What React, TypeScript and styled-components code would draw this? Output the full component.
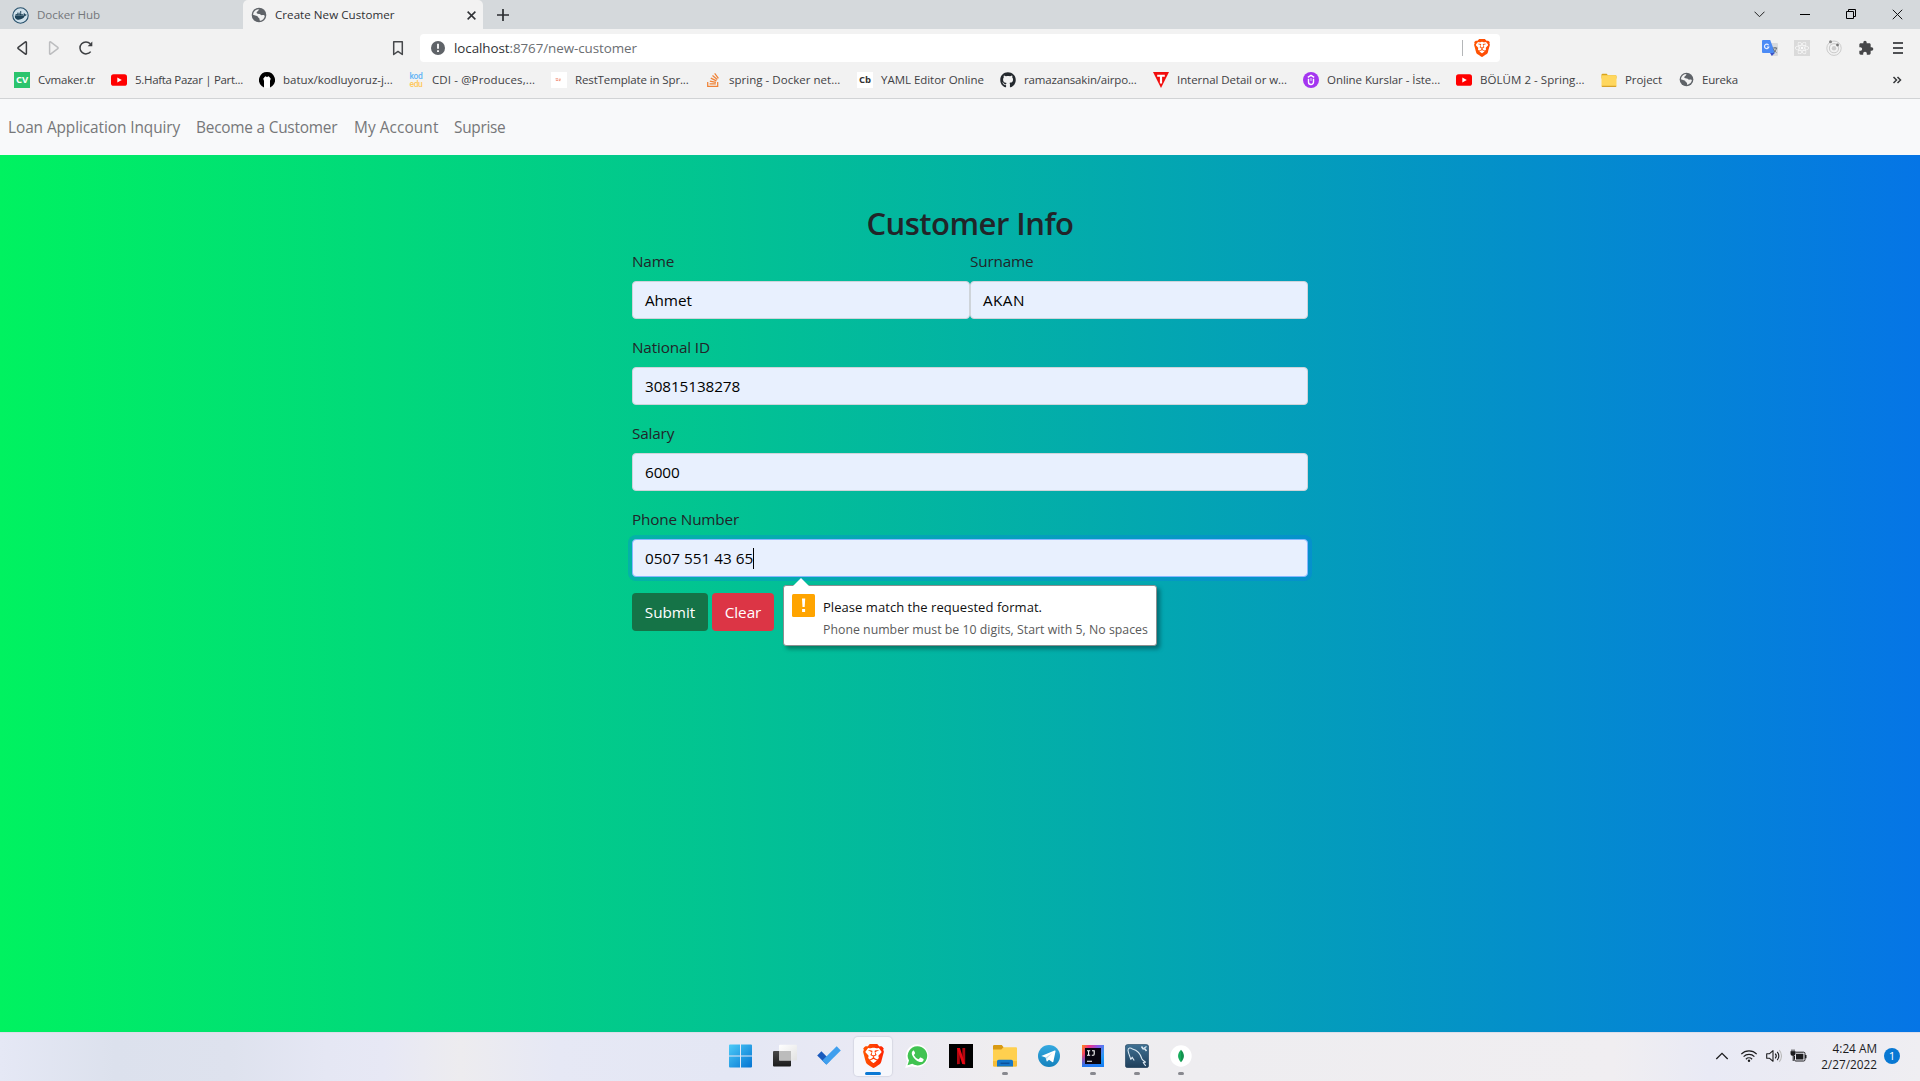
import React from "react";
import styled, { createGlobalStyle, css } from "styled-components";
import { FaDocker, FaGithub, FaReact, FaStackOverflow } from "react-icons/fa";
import { MdExtension } from "react-icons/md";
import { SiBrave } from "react-icons/si";

const GlobalStyle = createGlobalStyle`
  *, *::before, *::after { box-sizing: border-box; }
  body { margin: 0; overflow: hidden; font-family: "Open Sans", "Noto Sans", sans-serif; }
  svg { display: block; flex: none; }
`;

const Screen = styled.div`
  display: flex;
  flex-direction: column;
  width: 1920px;
  height: 1081px;
  overflow: hidden;
`;

/* ---------- browser chrome ---------- */

const TabStrip = styled.div`
  display: flex;
  height: 29px;
  background: #d5d9dc;
`;

const Tab = styled.div<{ $active?: boolean }>`
  display: flex;
  align-items: center;
  gap: 8px;
  width: ${(p) => (p.$active ? 240 : 243)}px;
  padding: 1px 7px 0 ${(p) => (p.$active ? 8 : 12)}px;
  background: ${(p) => (p.$active ? "#f2f2f2" : "transparent")};
  border-radius: ${(p) => (p.$active ? "5px 5px 0 0" : "0")};
  color: ${(p) => (p.$active ? "#2f3033" : "#74777b")};
`;

const TabTitle = styled.span<{ $ls?: number }>`
  flex: 1;
  font-size: 11.6px;
  line-height: 16px;
  letter-spacing: ${(p) => p.$ls ?? 0.03}px;
  white-space: nowrap;
`;

const NewTab = styled.div`
  display: flex;
  align-items: center;
  padding: 1px 0 0 14px;
`;

const WindowControls = styled.div`
  display: flex;
  margin-left: auto;
`;

const WindowButton = styled.div`
  display: flex;
  align-items: center;
  justify-content: center;
  width: 46px;
  height: 28px;
`;

const Toolbar = styled.div`
  display: flex;
  align-items: center;
  height: 38px;
  padding-left: 14px;
  background: #f2f2f2;
`;

const NavButtons = styled.div`
  display: flex;
  align-items: center;
  gap: 16px;
  width: 376px;
`;

const AddressBar = styled.div`
  display: flex;
  align-items: center;
  width: 1080px;
  height: 28px;
  margin-left: 14px;
  padding: 0 10px 0 10px;
  background: #fff;
  border-radius: 4px;
`;

const Url = styled.div`
  flex: 1;
  margin-left: 8px;
  color: #6b6e72;
  font-size: 13.4px;
  letter-spacing: -0.07px;
  line-height: 20px;
`;

const Host = styled.span`
  color: #303236;
`;

const AddressDivider = styled.div`
  width: 1px;
  height: 16px;
  margin-right: 11px;
  background: #b4b6b8;
`;

const Extensions = styled.div`
  display: flex;
  align-items: center;
  gap: 16px;
  margin-left: auto;
  padding-right: 14px;
`;

const BookmarksBar = styled.div`
  display: flex;
  align-items: center;
  height: 32px;
  padding: 0 15px 6px 14px;
  background: #f2f2f2;
  border-bottom: 1px solid #d1d3d5;
`;

const Bookmark = styled.div<{ $width: number }>`
  display: flex;
  flex: none;
  align-items: center;
  gap: 8px;
  width: ${(p) => p.$width}px;
  color: #3f4144;
`;

const BookmarkTitle = styled.span<{ $ls: number }>`
  font-size: 11.5px;
  line-height: 16px;
  letter-spacing: ${(p) => p.$ls}px;
  white-space: nowrap;
`;

const More = styled.div`
  margin-left: auto;
`;

const Favicon = styled.span<{ $bg?: string; $color?: string; $size?: number }>`
  display: flex;
  flex: none;
  flex-direction: column;
  align-items: center;
  justify-content: center;
  width: 16px;
  height: 16px;
  background: ${(p) => p.$bg ?? "transparent"};
  color: ${(p) => p.$color ?? "#fff"};
  font-size: ${(p) => p.$size ?? 9}px;
  font-weight: 700;
  line-height: 1;
`;

const KodEdu = styled.span<{ $color: string }>`
  color: ${(p) => p.$color};
  font-family: Roboto, sans-serif;
  font-size: 8.5px;
  font-weight: 500;
  line-height: 8px;
  letter-spacing: -0.4px;
`;

/* ---------- page ---------- */

const Navbar = styled.nav`
  display: flex;
  align-items: center;
  height: 56px;
  padding: 2px 0 0 8px;
  background: #f8f9fa;
`;

const NavLink = styled.a<{ $width: number; $ls: number }>`
  width: ${(p) => p.$width}px;
  color: #767779;
  font-size: 15.4px;
  letter-spacing: ${(p) => p.$ls}px;
  line-height: 24px;
  white-space: nowrap;
`;

const Page = styled.main`
  display: flex;
  flex-direction: column;
  height: 877px;
  padding: 48px 0 0 632px;
  background: linear-gradient(90deg, #00f260 0%, #0575e6 100%);
`;

const Form = styled.form`
  display: flex;
  flex-direction: column;
  width: 676px;
`;

const Title = styled.h2`
  height: 38px;
  margin: 0 0 8px;
  color: #212529;
  font-size: 31px;
  font-weight: 600;
  letter-spacing: -0.52px;
  line-height: 40px;
  text-align: center;
`;

const FieldRow = styled.div`
  display: flex;
`;

const Field = styled.div`
  position: relative;
  flex: 1;
  margin-bottom: 16px;
`;

const Label = styled.label`
  display: block;
  margin-bottom: 8px;
  color: #212529;
  font-size: 15.3px;
  letter-spacing: -0.16px;
  line-height: 24px;
`;

const Input = styled.div<{ $focus?: boolean; $ls?: number }>`
  display: flex;
  align-items: center;
  height: 38px;
  padding: 0 12px;
  border: 1px solid #ced4da;
  border-radius: 4px;
  background: #e8f0fe;
  color: #000;
  font-size: 15.3px;
  letter-spacing: ${(p) => p.$ls ?? -0.1}px;
  ${(p) =>
    p.$focus &&
    css`
      border-color: #86b7fe;
      box-shadow: 0 0 0 4px rgba(13, 110, 253, 0.25);
    `}
`;

const Caret = styled.span`
  width: 1px;
  height: 21px;
  background: #000;
`;

const Buttons = styled.div`
  display: flex;
  gap: 4px;
`;

const Button = styled.div<{ $bg: string; $width: number }>`
  width: ${(p) => p.$width}px;
  height: 38px;
  border-radius: 4px;
  background: ${(p) => p.$bg};
  color: #fff;
  font-size: 15.3px;
  letter-spacing: -0.05px;
  line-height: 38px;
  text-align: center;
`;

/* validation bubble that floats below the phone field */
const Bubble = styled.div`
  position: absolute;
  z-index: 2;
  top: 78px;
  left: 151px;
  display: flex;
  gap: 8px;
  width: 374px;
  height: 61px;
  padding: 8px;
  border: 1px solid #8b8f90;
  border-radius: 3px;
  background: #fff;
  box-shadow: 3px 3px 4px rgba(0, 0, 0, 0.35);
`;

const BubbleArrow = styled.div`
  position: absolute;
  top: -8px;
  left: 9px;
  border: solid transparent;
  border-width: 0 8px 8px;
  border-bottom-color: #fff;
`;

const BubbleText = styled.div`
  display: flex;
  flex-direction: column;
  padding-top: 2px;
  white-space: nowrap;
`;

const BubbleMessage = styled.span`
  color: #111;
  font-size: 13px;
  letter-spacing: 0.05px;
  line-height: 22px;
`;

const BubbleHint = styled.span`
  color: #5a5a5a;
  font-size: 12.3px;
  letter-spacing: 0.02px;
  line-height: 24px;
`;

/* ---------- taskbar ---------- */

const Taskbar = styled.footer`
  display: grid;
  grid-template-columns: 719px 484px 1fr;
  height: 49px;
  border-top: 1px solid #dcdeea;
  background: linear-gradient(
    90deg,
    #e5e8f5 0%,
    #dce1ed 6%,
    #dee2ee 12%,
    #e5e7f4 17%,
    #e7e8f5 20%,
    #edecef 24%,
    #e6e8f5 29%,
    #e4e7f4 38%,
    #e9e9f4 45%,
    #efedef 52%,
    #eeedf0 62%,
    #f0eef1 84%,
    #e9eaf5 89%,
    #ebebf3 94%,
    #efeef2 100%
  );
`;

const Apps = styled.div`
  display: flex;
  grid-column: 2;
`;

const AppSlot = styled.div`
  display: flex;
  flex-direction: column;
  align-items: center;
  width: 44px;
  padding-top: 4px;
`;

const AppTile = styled.div<{ $active?: boolean }>`
  display: flex;
  flex-direction: column;
  align-items: center;
  width: 38px;
  height: 39px;
  padding-top: 7px;
  border-radius: 4px;
  background: ${(p) => (p.$active ? "#f6f7fc" : "transparent")};
  box-shadow: ${(p) => (p.$active ? "0 0 1px 1px rgba(120,125,150,0.16)" : "none")};
`;

const Indicator = styled.div<{ $active?: boolean }>`
  width: ${(p) => (p.$active ? 16 : 6)}px;
  height: 3px;
  margin-top: 4px;
  border-radius: 2px;
  background: ${(p) => (p.$active ? "#0a78d4" : "#88898f")};
`;

const Tray = styled.div`
  display: flex;
  grid-column: 3;
  align-items: center;
  justify-content: flex-end;
  padding: 0 20px 2px 0;
  color: #1c1c1e;
`;

const TrayIcons = styled.div`
  display: flex;
  align-items: center;
  gap: 8px;
  margin-right: 13px;
`;

const Clock = styled.div`
  width: 57px;
  margin-right: 7px;
  font-size: 11.8px;
  line-height: 16px;
  text-align: right;
`;

const Badge = styled.div`
  width: 16px;
  height: 16px;
  border-radius: 50%;
  background: #0878d3;
  color: #fff;
  font-size: 11.5px;
  line-height: 16px;
  text-align: center;
`;

/* ---------- icons ---------- */

const Globe = ({ size = 16 }: { size?: number }) => (
  <svg width={size} height={size} viewBox="0 0 16 16">
    <circle cx="8" cy="8" r="7.300" fill="#5f6368" />
    <path
      d="M8.600 2.200C7.200 2.300 7.900 3.600 6.700 4.300 5.600 4.900 5.200 5.600 6.100 6.400c1 .7 2.600.1 3.300 1.100.7.900 1.700.6 2.700.6 1 .1 1.700.5 1.600 1.300a6 6 0 0 1-4.300 4.300c-1.100.2-.7-1-.9-1.900-.3-1.100-1.500-.9-1.700-2C6.600 8.900 5.500 8.600 4.300 8.400L2 7.700A6.100 6.100 0 0 1 8.600 2.200z"
      fill="#f2f2f2"
    />
  </svg>
);

const DockerIcon = () => (
  <svg width="17" height="17" viewBox="0 0 17 17">
    <circle cx="8.500" cy="8.500" r="7.700" fill="#cfe0ea" stroke="#27506b" strokeWidth="1.100" />
    <FaDocker x="2.700" y="2.500" size={12} color="#1d4258" />
  </svg>
);

const CloseIcon = ({ size, stroke, width }: { size: number; stroke: string; width: number }) => (
  <svg width={size} height={size} viewBox="0 0 10 10">
    <path d="M.7.7l8.600 8.600M9.300.7L.7 9.300" stroke={stroke} strokeWidth={width} />
  </svg>
);

const Triangle = ({ flip, color }: { flip?: boolean; color: string }) => (
  <svg width="16" height="16" viewBox="0 0 16 16">
    <path
      d="M12.400 2.400v11.200a.6.6 0 0 1-.95.5L4.200 8.600a.75.75 0 0 1 0-1.200l7.250-5.500a.6.6 0 0 1 .95.5z"
      transform={flip ? "matrix(-1 0 0 1 16 0)" : undefined}
      fill="none"
      stroke={color}
      strokeWidth="1.500"
      strokeLinejoin="round"
    />
  </svg>
);

const YouTube = () => (
  <svg width="16" height="16" viewBox="0 0 16 16">
    <rect y="2.200" width="16" height="11.600" rx="2.600" fill="#f00" />
    <path d="M6.300 5.500L10.800 8l-4.500 2.500z" fill="#fff" />
  </svg>
);

const Penguin = () => (
  <svg width="16" height="16" viewBox="0 0 16 16">
    <path d="M8 0a8 8 0 0 0-5.300 14L5 15.600V9L4.400 6.600 6.300 4.300 8 5l1.700-.7 1.900 2.300L11 9v6.600l2.300-1.600A8 8 0 0 0 8 0z" fill="#000" />
    <path d="M5.200 15.600V9l-.6-2.300 1.800-2L8 5.400l1.600-.7 1.800 2L10.800 9v6.600L8 16z" fill="#fff" />
  </svg>
);

const TurkTriangle = () => (
  <svg width="16" height="16" viewBox="0 0 16 16">
    <path d="M0 0h16L8 16z" fill="#f20d0d" />
    <path d="M4.200 2.700h7.600v2H9.100v6.800H6.900V4.700H4.200z" fill="#fff" />
  </svg>
);

const UdemyLike = () => (
  <svg width="16" height="16" viewBox="0 0 16 16">
    <circle cx="8" cy="8" r="8" fill="#a435f0" />
    <path d="M5.500 6.800v3.200a2.500 2.500 0 0 0 5 0V6.800M4.800 5.300L8 3.400l3.200 1.900" fill="none" stroke="#fff" strokeWidth="1.400" />
    <path d="M8 6v3" stroke="#fff" strokeWidth=".8" />
  </svg>
);

const FolderSmall = () => (
  <svg width="16" height="16" viewBox="0 0 16 16">
    <path d="M.5 3A1.200 1.200 0 0 1 1.700 1.700h4l1.200 1.500h7.400A1.200 1.200 0 0 1 15.500 4.400v2H.5z" fill="#d9a51c" />
    <rect x=".5" y="3.200" width="15" height="11.600" rx="1.200" fill="#ffd75e" />
    <path d="M.7 13.800h14.600v.4a.8.8 0 0 1-.8.8h-13a.8.8 0 0 1-.8-.8z" fill="#d7a22a" />
  </svg>
);

const Translate = () => (
  <svg width="16" height="16" viewBox="0 0 16 16">
    <path d="M6.500 3H15a1 1 0 0 1 1 1v11a1 1 0 0 1-1 1H10z" fill="#d8dadd" />
    <path d="M1 0h7.200L13 13H1a1 1 0 0 1-1-1V1a1 1 0 0 1 1-1z" fill="#4c8bf5" />
    <path d="M8 13h4.800L9.800 16z" fill="#3a50c8" />
    <path d="M6.600 5.300A2.200 2.200 0 1 0 6.800 7H4.900" fill="none" stroke="#e9f0ff" strokeWidth="1.200" />
    <path d="M10.800 8h4.400M13 7v1M11.500 9c.5 1.500 1.600 2.700 3 3.600M14.500 8c-.4 2-1.500 3.600-3 4.600" fill="none" stroke="#5f676d" strokeWidth=".9" />
  </svg>
);

const ReactTile = () => (
  <svg width="16" height="16" viewBox="0 0 16 16">
    <rect width="16" height="16" fill="#dadada" />
    <FaReact x="1" y="1" size={14} color="#fbfbfb" />
  </svg>
);

const Orbit = () => (
  <svg width="16" height="16" viewBox="0 0 16 16">
    <g fill="none" stroke="#cbcbcb">
      <circle cx="8" cy="8.200" r="7.200" strokeWidth="1" />
      <circle cx="8" cy="8.200" r="4.600" strokeWidth="1.100" />
    </g>
    <circle cx="8" cy="8.200" r="2.200" fill="#cdcdcd" />
    <circle cx="4.500" cy="1.800" r="1.500" fill="#858585" />
    <circle cx="11.500" cy="5" r="1.400" fill="#777" />
  </svg>
);

const LionShape = styled(SiBrave)<{ $fill: string }>`
  fill: ${(p) => p.$fill};
`;

const BraveLion = ({ w, h, from, to }: { w: number; h: number; from: string; to: string }) => {
  const id = `brave${w}`;
  return (
    <svg width={w} height={h} viewBox="1.700 0 20.600 24" preserveAspectRatio="none">
      <defs>
        <linearGradient id={id} x1="0" x2="1">
          <stop offset="0" stopColor={from} />
          <stop offset="1" stopColor={to} />
        </linearGradient>
      </defs>
      <path d="M6 4h12l2 5-2.500 8L12 21.500 6.500 17 4 9z" fill="#fff" />
      <LionShape size={24} $fill={`url(#${id})`} />
    </svg>
  );
};

const WindowsLogo = () => (
  <svg width="24" height="24" viewBox="0 0 24 24">
    <defs>
      <linearGradient id="win" x1="0" y1="0" x2="1" y2="1">
        <stop offset="0" stopColor="#4ccbf8" />
        <stop offset="1" stopColor="#0574d2" />
      </linearGradient>
    </defs>
    <path fill="url(#win)" d="M0 1.500a1 1 0 0 1 1-1h10V11.500H0zM12 .5h10a1 1 0 0 1 1 1v10h-11zM0 12.500h11v11h-10a1 1 0 0 1-1-1zM12 12.500h11v10a1 1 0 0 1-1 1h-10z" />
  </svg>
);

const TaskView = () => (
  <svg width="24" height="24" viewBox="0 0 24 24">
    <defs>
      <linearGradient id="tvd" x1="0" y1="0" x2="0" y2="1">
        <stop offset="0" stopColor="#484848" />
        <stop offset="1" stopColor="#1b1b1b" />
      </linearGradient>
      <linearGradient id="tvl" x1="0" y1="0" x2="1" y2="1">
        <stop offset="0" stopColor="#fff" />
        <stop offset="1" stopColor="#e2e2e2" />
      </linearGradient>
    </defs>
    <rect x="0" y="7" width="18" height="15.500" rx="1" fill="url(#tvd)" />
    <rect x="6" y=".8" width="18" height="15.600" rx="1" fill="url(#tvl)" />
    <path d="M6 7h12v9.400H6z" fill="#bcbcbc" />
  </svg>
);

const TodoCheck = () => (
  <svg width="24" height="24" viewBox="0 0 24 24">
    <path d="M.2 11.500L4.400 7.300l9 9-4.100 4.200z" fill="#195abd" />
    <path d="M5.300 16.600L19.700 2.200l4.100 4.200L9.400 20.700z" fill="#3f9fee" />
  </svg>
);

const WhatsApp = () => (
  <svg width="24" height="24" viewBox="0 0 24 24">
    <path d="M12.500.3A11.500 11.500 0 1 1 7 22.200L.2 23.900l2-6.700A11.500 11.500 0 0 1 12.500.3z" fill="#fff" />
    <path d="M12.500 2.200a9.600 9.600 0 1 1-5.200 17.600l-4.800 1.400 1.500-4.600A9.600 9.600 0 0 1 12.500 2.200z" fill="#40c351" />
    <path
      d="M8.900 6.500c-.3 0-.8.100-1.200.6-.7.800-1.300 1.900-.6 3.800 1.300 3.300 4.100 6 7.600 7 1.700.4 3.100-.3 3.700-1.500.2-.5.300-1.200.1-1.400l-2.700-1.500c-.4-.2-.7 0-.9.300l-.9 1.200c-.3.300-.6.300-1 .1a9 9 0 0 1-3.900-3.700c-.1-.3-.1-.5.1-.8l.8-1.100c.1-.2.1-.5 0-.7l-1-2c-.1-.2-.1-.3-.1-.3z"
      fill="#fff"
    />
  </svg>
);

const Netflix = () => (
  <svg width="24" height="24" viewBox="0 0 24 24">
    <rect width="24" height="24" fill="#000" />
    <path d="M8 4h2.800v16L8 20.300zM13.400 4h2.800v16.300l-2.800-.3z" fill="#b1060f" />
    <path d="M8 4h2.900l5.300 16.300-2.900-.3z" fill="#e50914" />
  </svg>
);

const Explorer = () => (
  <svg width="24" height="24" viewBox="0 0 24 24">
    <path d="M0 2.200A1.200 1.200 0 0 1 1.200 1h7.600l2 2.600L8.500 6H0z" fill="#d99a12" />
    <path d="M0 5.500h8.500L10.600 3.200H23a1 1 0 0 1 1 1v17.300a1 1 0 0 1-1 1H1a1 1 0 0 1-1-1z" fill="#ffd04f" />
    <path d="M0 17h24v4.500a1 1 0 0 1-1 1H1a1 1 0 0 1-1-1z" fill="#f6bd38" />
    <path d="M4 22.500v-5A1.700 1.700 0 0 1 5.700 15.700h12.600A1.700 1.700 0 0 1 20 17.500v5z" fill="#1477c9" />
    <path d="M7.500 19.300h9" stroke="#0d519b" strokeWidth="1.500" />
  </svg>
);

const Telegram = () => (
  <svg width="24" height="24" viewBox="0 0 24 24">
    <defs>
      <linearGradient id="tg" x1="0" y1="0" x2="0" y2="1">
        <stop offset="0" stopColor="#35a9e0" />
        <stop offset="1" stopColor="#1582bd" />
      </linearGradient>
    </defs>
    <circle cx="12" cy="12" r="11" fill="url(#tg)" />
    <path d="M4.900 11.700L17.600 6.600c.6-.2 1.100.1.9 1l-2.100 9.900c-.2.700-.6.900-1.200.5l-3.200-2.300-1.600 1.500c-.5.500-.8.200-.9-.4l-.9-3.400-3.500-1.100c-.7-.2-.7-.5-.2-.6z" fill="#fff" />
    <path d="M9 13.300l6.400-4.400-5.100 5.100-.3 2.800z" fill="#b9d9ec" />
  </svg>
);

const IntelliJ = () => (
  <svg width="24" height="24" viewBox="0 0 24 24">
    <defs>
      <linearGradient id="ij" x1="0" y1=".1" x2="1" y2=".5">
        <stop offset="0" stopColor="#fd8224" />
        <stop offset=".25" stopColor="#f5317f" />
        <stop offset=".6" stopColor="#8b55e8" />
        <stop offset="1" stopColor="#21a4f5" />
      </linearGradient>
      <linearGradient id="ijb" x1="0" y1="0" x2="0" y2="1">
        <stop offset=".4" stopColor="#0a7cf5" stopOpacity="0" />
        <stop offset="1" stopColor="#1a7bf2" />
      </linearGradient>
    </defs>
    <rect x="1" y="1" width="22" height="22" fill="url(#ij)" />
    <rect x="1" y="1" width="22" height="22" fill="url(#ijb)" />
    <rect x="4" y="4" width="16" height="16" fill="#080510" />
    <path d="M6 6.700h3.200M6 11.300h3.200M7.600 6.700v4.600M11 6.700h2.700M13.200 6.200v3.700q0 1.400-1.300 1.400h-1.100M6 17.200h5" fill="none" stroke="#fff" strokeWidth="1.100" />
  </svg>
);

const Workbench = () => (
  <svg width="24" height="24" viewBox="0 0 24 24">
    <defs>
      <linearGradient id="wb" x1="0" y1="0" x2="0" y2="1">
        <stop offset="0" stopColor="#3f7193" />
        <stop offset="1" stopColor="#1f3f5b" />
      </linearGradient>
    </defs>
    <rect x=".3" y=".5" width="23.400" height="23.200" rx="2.500" fill="url(#wb)" stroke="#21425c" strokeWidth=".6" />
    <path
      d="M5.800 15.500l1.400-2.300 2 3.300M5.800 15.500C4.800 12 3.500 9.500 3 6.500 3 3.500 5.500 3.500 7.500 5c4.500 1 8 5 9.500 10 .5 1.500 2.500 2 3.500 3.200l-2.300.3 2.500 3.300"
      fill="none"
      stroke="#dce9f2"
      strokeWidth="1.100"
      strokeLinejoin="round"
    />
    <path d="M16.500 2.500l1.500 2.200 2 .3 1.500 2" fill="none" stroke="#dce9f2" strokeWidth="1.500" />
    <path d="M18.500 4.500l3-2" stroke="#dce9f2" strokeWidth="1.200" />
  </svg>
);

const Compass = () => (
  <svg width="24" height="24" viewBox="0 0 24 24">
    <circle cx="12" cy="12" r="10.700" fill="#fff" />
    <path d="M12 5.800c3.900 4 3.900 8.400 0 12.400z" fill="#12924f" />
    <path d="M12 5.800c-3.900 4-3.900 8.400 0 12.400z" fill="#17ac5c" />
  </svg>
);

const SketchMark = () => (
  <svg width="16" height="16" viewBox="0 0 16 16">
    <rect width="16" height="16" fill="#fff" />
    <path d="M4.500 6.800h2.500M4.800 8.400h2.200M7.600 7.200h2.200M7.600 8.600h1.800" stroke="#f08a70" strokeWidth=".9" />
  </svg>
);

/* ---------- data ---------- */

const bookmarks: { title: string; width: number; ls: number; icon: React.ReactNode }[] = [
  { title: "Cvmaker.tr", width: 97, ls: -0.2, icon: <Favicon $bg="#2bc46d" $size={9.5}>CV</Favicon> },
  { title: "5.Hafta Pazar | Part...", width: 148, ls: -0.31, icon: <YouTube /> },
  { title: "batux/kodluyoruz-j...", width: 149, ls: -0.02, icon: <Penguin /> },
  {
    title: "CDI - @Produces,...",
    width: 143,
    ls: 0.12,
    icon: (
      <Favicon>
        <KodEdu $color="#64b5f6">kod</KodEdu>
        <KodEdu $color="#ffc95c">edu</KodEdu>
      </Favicon>
    ),
  },
  { title: "RestTemplate in Spr...", width: 154, ls: -0.13, icon: <SketchMark /> },
  { title: "spring - Docker net...", width: 152, ls: 0.03, icon: <FaStackOverflow size={16} color="#ef8236" /> },
  { title: "YAML Editor Online", width: 143, ls: -0.03, icon: <Favicon $bg="#fff" $color="#333" $size={9.5}>Cb</Favicon> },
  { title: "ramazansakin/airpo...", width: 153, ls: -0.17, icon: <FaGithub size={16} color="#24292e" /> },
  { title: "Internal Detail or w...", width: 150, ls: -0.07, icon: <TurkTriangle /> },
  { title: "Online Kurslar - İste...", width: 153, ls: -0.06, icon: <UdemyLike /> },
  { title: "BÖLÜM 2 - Spring...", width: 145, ls: 0.05, icon: <YouTube /> },
  { title: "Project", width: 78, ls: -0.07, icon: <FolderSmall /> },
  { title: "Eureka", width: 80, ls: -0.2, icon: <Globe size={15} /> },
];

const links = [
  { text: "Loan Application Inquiry", width: 188, ls: -0.08 },
  { text: "Become a Customer", width: 158, ls: -0.22 },
  { text: "My Account", width: 100, ls: 0.08 },
  { text: "Suprise", width: 70, ls: -0.3 },
];

const apps: { icon: React.ReactNode; state?: "active" | "open" }[] = [
  { icon: <WindowsLogo /> },
  { icon: <TaskView /> },
  { icon: <TodoCheck /> },
  { icon: <BraveLion w={21} h={24} from="#ff5601" to="#ff2504" />, state: "active" },
  { icon: <WhatsApp /> },
  { icon: <Netflix /> },
  { icon: <Explorer />, state: "open" },
  { icon: <Telegram /> },
  { icon: <IntelliJ />, state: "open" },
  { icon: <Workbench />, state: "open" },
  { icon: <Compass />, state: "open" },
];

export default function App() {
  return (
    <Screen>
      <GlobalStyle />
      <TabStrip>
        <Tab>
          <DockerIcon />
          <TabTitle $ls={-0.1}>Docker Hub</TabTitle>
        </Tab>
        <Tab $active>
          <Globe size={16} />
          <TabTitle>Create New Customer</TabTitle>
          <CloseIcon size={9} stroke="#303236" width={1.7} />
        </Tab>
        <NewTab>
          <svg width="12" height="12" viewBox="0 0 12 12">
            <path d="M6 0v12M0 6h12" stroke="#2b2d30" strokeWidth="1.700" />
          </svg>
        </NewTab>
        <WindowControls>
          <WindowButton>
            <svg width="11" height="7" viewBox="0 0 11 7">
              <path d="M.5.7l5 5 5-5" fill="none" stroke="#222" />
            </svg>
          </WindowButton>
          <WindowButton>
            <svg width="10" height="1" viewBox="0 0 10 1">
              <path d="M0 .5h10" stroke="#000" />
            </svg>
          </WindowButton>
          <WindowButton>
            <svg width="10" height="10" viewBox="0 0 10 10">
              <path d="M.5 2.500h7v7h-7zM2.500 2.500v-2h7v7h-2" fill="none" stroke="#000" />
            </svg>
          </WindowButton>
          <WindowButton>
            <CloseIcon size={11} stroke="#111" width={0.9} />
          </WindowButton>
        </WindowControls>
      </TabStrip>

      <Toolbar>
        <NavButtons>
          <Triangle color="#3d3f42" />
          <Triangle flip color="#bcbdbf" />
          <svg width="16" height="16" viewBox="0 0 16 16">
            <path d="M12.700 11.600A6 6 0 1 1 12.300 3.700" fill="none" stroke="#3d3f42" strokeWidth="1.500" />
            <path d="M14.300 1.600v4.600h-4.600z" fill="#3d3f42" />
          </svg>
        </NavButtons>
        <svg width="16" height="16" viewBox="0 0 16 16">
          <path d="M3.700 1.700h8.600v12.800L8 11.400l-4.300 3.100z" fill="none" stroke="#46484b" strokeWidth="1.500" strokeLinejoin="round" />
        </svg>
        <AddressBar>
          <svg width="16" height="16" viewBox="0 0 16 16">
            <circle cx="8" cy="8" r="7" fill="#5f6368" />
            <path d="M8 3.800v5M8 10.300v1.800" stroke="#fff" strokeWidth="1.800" />
          </svg>
          <Url>
            <Host>localhost</Host>:8767/new-customer
          </Url>
          <AddressDivider />
          <BraveLion w={16} h={18} from="#ff5500" to="#ff4a08" />
        </AddressBar>
        <Extensions>
          <Translate />
          <ReactTile />
          <Orbit />
          <MdExtension size={16} color="#464749" />
          <svg width="16" height="16" viewBox="0 0 16 16">
            <path d="M3 3h10M3 8h10M3 13h10" stroke="#505255" strokeWidth="1.900" />
          </svg>
        </Extensions>
      </Toolbar>

      <BookmarksBar>
        {bookmarks.map((b) => (
          <Bookmark key={b.title} $width={b.width}>
            {b.icon}
            <BookmarkTitle $ls={b.ls}>{b.title}</BookmarkTitle>
          </Bookmark>
        ))}
        <More>
          <svg width="16" height="16" viewBox="0 0 16 16">
            <path d="M4.500 5l3 3-3 3M8.500 5l3 3-3 3" fill="none" stroke="#36383b" strokeWidth="1.500" />
          </svg>
        </More>
      </BookmarksBar>

      <Navbar>
        {links.map((l) => (
          <NavLink key={l.text} $width={l.width} $ls={l.ls}>
            {l.text}
          </NavLink>
        ))}
      </Navbar>

      <Page>
        <Form>
          <Title>Customer Info</Title>
          <FieldRow>
            <Field>
              <Label>Name</Label>
              <Input>Ahmet</Input>
            </Field>
            <Field>
              <Label>Surname</Label>
              <Input $ls={0.4}>AKAN</Input>
            </Field>
          </FieldRow>
          <Field>
            <Label>National ID</Label>
            <Input>30815138278</Input>
          </Field>
          <Field>
            <Label>Salary</Label>
            <Input>6000</Input>
          </Field>
          <Field>
            <Label>Phone Number</Label>
            <Input $focus $ls={0}>
              0507 551 43 65
              <Caret />
            </Input>
            <Bubble>
              <BubbleArrow />
              <svg width="23" height="23" viewBox="0 0 23 23">
                <rect width="23" height="23" rx="1.500" fill="#ffa400" />
                <path d="M10 4.500h3.200l-.5 8.500h-2.200z" fill="#fff" />
                <rect x="10.100" y="15" width="3" height="3" fill="#fff" />
              </svg>
              <BubbleText>
                <BubbleMessage>Please match the requested format.</BubbleMessage>
                <BubbleHint>Phone number must be 10 digits, Start with 5, No spaces</BubbleHint>
              </BubbleText>
            </Bubble>
          </Field>
          <Buttons>
            <Button $bg="#157347" $width={76}>Submit</Button>
            <Button $bg="#dc3545" $width={62}>Clear</Button>
          </Buttons>
        </Form>
      </Page>

      <Taskbar>
        <Apps>
          {apps.map((a, i) => (
            <AppSlot key={i}>
              <AppTile $active={a.state === "active"}>
                {a.icon}
                {a.state && <Indicator $active={a.state === "active"} />}
              </AppTile>
            </AppSlot>
          ))}
        </Apps>
        <Tray>
          <TrayIcons>
            <svg width="16" height="16" viewBox="0 0 16 16">
              <path d="M2.300 11L8 5.300l5.700 5.700" fill="none" stroke="currentColor" strokeWidth="1.300" />
            </svg>
            <svg width="20" height="16" viewBox="-1 0 20 16">
              <g fill="none" stroke="currentColor" strokeWidth="1.200">
                <path d="M2.300 6.200a10.800 10.800 0 0 1 15.400 0" />
                <path d="M4.600 8.700a7.600 7.600 0 0 1 10.800 0" />
                <path d="M6.900 11.200a4.400 4.400 0 0 1 6.200 0" />
              </g>
              <circle cx="10" cy="12.800" r="1.200" fill="currentColor" />
            </svg>
            <svg width="16" height="16" viewBox="0 0 16 16">
              <g fill="none" stroke="currentColor" strokeWidth="1.100">
                <path d="M.7 5.800h2.600L7 2.700v10.600L3.300 10.200H.7z" strokeLinejoin="round" />
                <path d="M9.200 5.700a3.300 3.300 0 0 1 0 4.600M11.200 3.900a6 6 0 0 1 0 8.200" />
                <path d="M13.200 2.200a8.500 8.500 0 0 1 0 11.600" stroke="#bbb" />
              </g>
            </svg>
            <svg width="17" height="16" viewBox="0 0 17 16">
              <path d="M5.500 4.200h8.200a1.300 1.300 0 0 1 1.300 1.300v6.200a1.300 1.300 0 0 1-1.300 1.300H5.800a1.300 1.300 0 0 1-1.300-1.300V8" fill="none" stroke="currentColor" />
              <path d="M6 5.800h7.400v5.700H6zM15 7h1.500v3.200H15zM.5 3.300h1V1.500h1v1.800h1V1.500h1v1.800h1v2.500a2 2 0 0 1-1.800 2V13h-1V7.800a2 2 0 0 1-2.200-2z" fill="currentColor" />
            </svg>
          </TrayIcons>
          <Clock>
            4:24 AM
            <br />
            2/27/2022
          </Clock>
          <Badge>1</Badge>
        </Tray>
      </Taskbar>
    </Screen>
  );
}
